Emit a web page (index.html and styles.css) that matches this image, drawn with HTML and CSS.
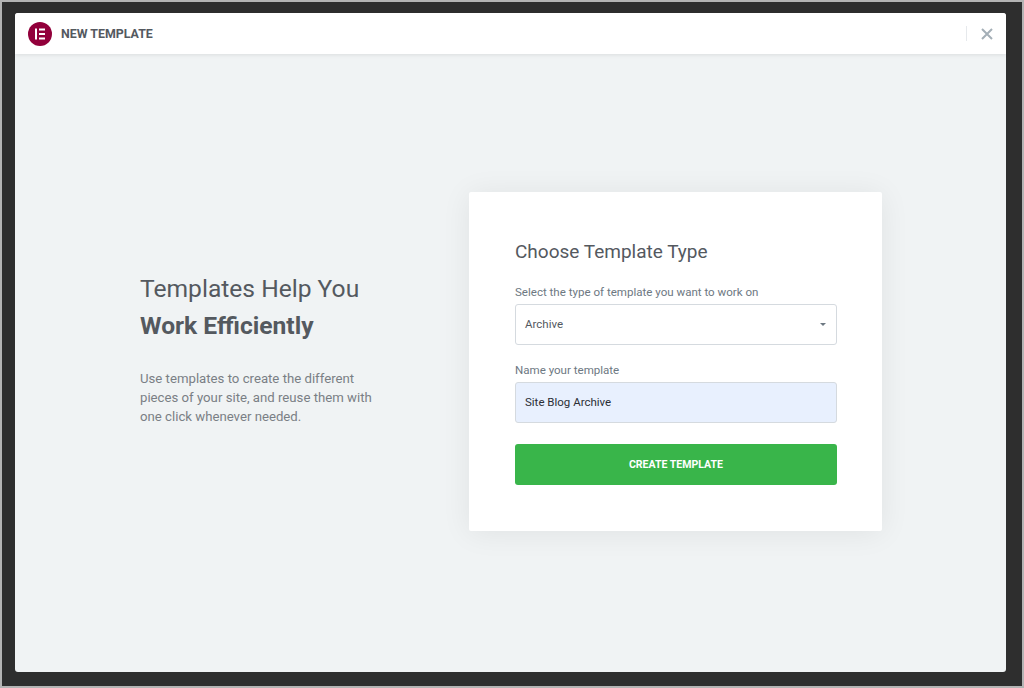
FILE: index.html
```html
<!DOCTYPE html>
<html lang="en">
<head>
    <meta charset="UTF-8">
    <title>New Template</title>
    <link rel="stylesheet" href="styles.css">
</head>
<body>
    <div class="frame">
        <div class="modal">
            <header class="modal-header">
                <div class="brand">
                    <div class="logo">
                        <svg width="24" height="24" viewBox="0 0 24 24">
                            <circle cx="12" cy="12" r="12" fill="#92003b"/>
                            <rect x="7" y="6.5" width="2" height="11" fill="#fff"/>
                            <rect x="11" y="6.5" width="6" height="2" fill="#fff"/>
                            <rect x="11" y="11" width="6" height="2" fill="#fff"/>
                            <rect x="11" y="15.5" width="6" height="2" fill="#fff"/>
                        </svg>
                    </div>
                    <span class="modal-title">NEW TEMPLATE</span>
                </div>
                <div class="close-box">
                    <svg width="12" height="12" viewBox="0 0 12 12">
                        <path d="M1 1 L11 11 M11 1 L1 11" stroke="#a4afb7" stroke-width="2" fill="none"/>
                    </svg>
                </div>
            </header>
            <main class="modal-body">
                <section class="intro">
                    <h2 class="intro-title">Templates Help You <strong>Work Efficiently</strong></h2>
                    <p class="intro-text">Use templates to create the different pieces of your site, and reuse them with one click whenever needed.</p>
                </section>
                <form class="card">
                    <h3 class="card-title">Choose Template Type</h3>
                    <div class="field">
                        <label class="field-label">Select the type of template you want to work on</label>
                        <div class="select-box">
                            <span>Archive</span>
                            <span class="caret"></span>
                        </div>
                    </div>
                    <div class="field">
                        <label class="field-label">Name your template</label>
                        <div class="text-box">Site Blog Archive</div>
                    </div>
                    <button type="button" class="create-button">CREATE TEMPLATE</button>
                </form>
            </main>
        </div>
    </div>
</body>
</html>
```

FILE: styles.css
```css
* {
    margin: 0;
    padding: 0;
    box-sizing: border-box;
}

body {
    font-family: Roboto, 'Liberation Sans', sans-serif;
    width: 1024px;
    height: 688px;
    overflow: hidden;
}

.frame {
    width: 1024px;
    height: 688px;
    background: #2e2e2e;
    border: 2px solid #b4b4b4;
    padding: 11px 16px 14px 13px;
}

.modal {
    height: 100%;
    display: flex;
    flex-direction: column;
    background: #f0f3f4;
    border-radius: 3px;
}

.modal-header {
    height: 41px;
    display: flex;
    align-items: center;
    justify-content: space-between;
    background: #fff;
    border-radius: 3px 3px 0 0;
    box-shadow: 0 1px 4px rgba(0, 0, 0, 0.09);
    padding-left: 13px;
}

.brand {
    display: flex;
    align-items: center;
    gap: 9px;
}

.logo {
    display: flex;
}

.modal-title {
    font-size: 12.4px;
    font-weight: 700;
    color: #54595f;
}

.close-box {
    display: flex;
    align-items: center;
    justify-content: center;
    width: 40px;
    height: 15px;
    border-left: 1px solid #e6e9ec;
}

.modal-body {
    flex: 1;
    display: flex;
    align-items: center;
    padding: 0 124px 4px 125px;
}

.intro {
    width: 329px;
    color: #54595f;
    margin-bottom: 26px;
}

.intro-title {
    font-size: 24.6px;
    font-weight: 400;
    line-height: 37px;
    width: 240px;
}

.intro-title strong {
    font-weight: 700;
}

.intro-text {
    font-size: 13.2px;
    line-height: 19px;
    color: #7a7f85;
    margin-top: 25px;
    width: 240px;
}

.card {
    width: 413px;
    height: 339px;
    background: #fff;
    padding: 47px 45px 0 46px;
    box-shadow: 0 2px 30px rgba(0, 0, 0, 0.07);
    border-radius: 2px;
}

.card-title {
    font-size: 19px;
    font-weight: 400;
    line-height: 26px;
    color: #54595f;
    margin-bottom: 20px;
}

.field {
    margin-bottom: 18px;
}

.field-label {
    display: block;
    font-size: 11.55px;
    line-height: 14px;
    color: #6d7882;
    margin-bottom: 5px;
}

.select-box {
    height: 41px;
    display: flex;
    align-items: center;
    justify-content: space-between;
    padding: 0 10px 0 9px;
    font-size: 11.5px;
    color: #54595f;
    background: #fff;
    border: 1px solid #d5dadf;
    border-radius: 3px;
}

.caret {
    width: 0;
    height: 0;
    border-left: 3.5px solid transparent;
    border-right: 3.5px solid transparent;
    border-top: 3.5px solid #6d7882;
}

.text-box {
    height: 41px;
    display: flex;
    align-items: center;
    padding: 0 9px;
    font-size: 11.5px;
    color: #2b2f36;
    background: #e8f0fe;
    border: 1px solid #d5dadf;
    border-radius: 3px;
}

.create-button {
    display: block;
    width: 100%;
    height: 41px;
    margin-top: 21px;
    font-family: inherit;
    font-size: 10.55px;
    font-weight: 700;
    color: #fff;
    background: #39b54a;
    border: none;
    border-radius: 3px;
}
```
